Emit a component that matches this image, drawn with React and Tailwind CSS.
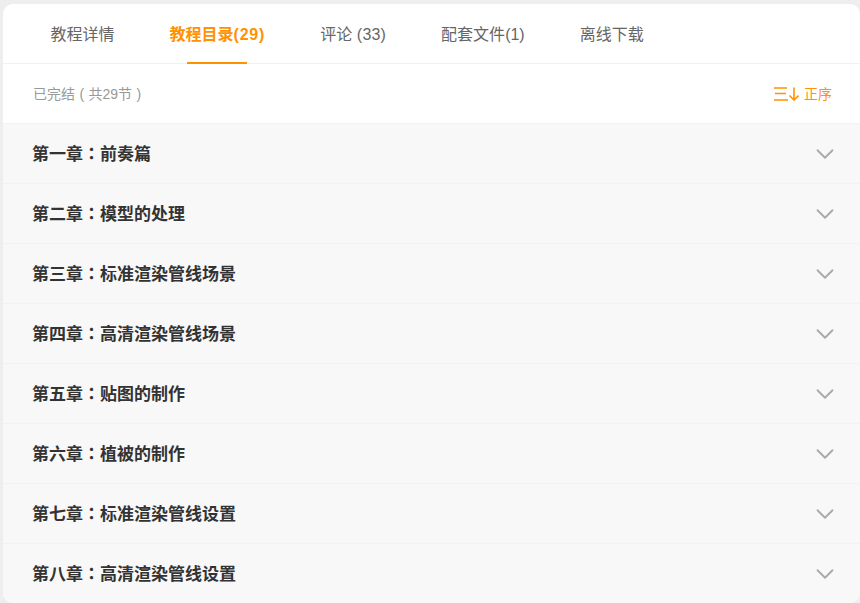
import { ChevronDown } from "lucide-react";

const tabs = [
  { name: "教程详情" },
  { name: "教程目录", count: "(29)", active: true, spacing: "tracking-[0.8px]" },
  { name: "评论", count: " (33)", spacing: "tracking-[0.2px]" },
  { name: "配套文件", count: "(1)" },
  { name: "离线下载" },
];

const chapters = [
  ["第一章", "前奏篇"],
  ["第二章", "模型的处理"],
  ["第三章", "标准渲染管线场景"],
  ["第四章", "高清渲染管线场景"],
  ["第五章", "贴图的制作"],
  ["第六章", "植被的制作"],
  ["第七章", "标准渲染管线设置"],
  ["第八章", "高清渲染管线设置"],
];

export default function App() {
  return (
    <div className="h-[603px] overflow-hidden bg-[#eeeeee] pl-[3px] pt-1 font-['Liberation_Sans','Noto_Sans_CJK_SC',sans-serif]">
      <div className="h-[599px] overflow-hidden rounded-[10px] bg-white">
        {/* Tabs */}
        <div className="flex h-[60px] gap-[55px] border-b border-[#f2f2f2] pl-[47.5px]">
          {tabs.map((t) => (
            <div
              key={t.name}
              className={`relative flex h-[60px] items-center whitespace-pre pt-0.5 text-base ${
                t.active ? "font-bold text-[#ff9200]" : "text-[#666666]"
              }`}
            >
              {t.name}
              {t.count && <span className={t.spacing}>{t.count}</span>}
              {t.active && (
                <span className="absolute bottom-0 left-1/2 h-0.5 w-[60px] -translate-x-1/2 bg-[#ff9200]" />
              )}
            </div>
          ))}
        </div>

        {/* Status */}
        <div className="flex h-[59px] items-center justify-between pl-[30px] pr-[28px]">
          <span className="whitespace-pre text-sm text-[#999999] [word-spacing:0.5px]">已完结 ( 共29节 )</span>
          <span className="flex items-center gap-[5px] text-sm text-[#ff9200]">
            <svg width="25" height="14" viewBox="0 0 25 14" fill="none" stroke="currentColor" strokeWidth="1.6">
              <path d="M0 1h13M1 6.5h11M0 13h14" />
              <path d="M20 0.5v12.5M15.5 8.5l4.5 4.5 4.5-4.5" />
            </svg>
            正序
          </span>
        </div>

        {/* Chapters */}
        <div>
          {chapters.map(([no, title]) => (
            <div
              key={no}
              className="flex h-[60px] items-center justify-between border-t border-[#f2f2f2] bg-[#f8f8f8] pl-[29px] pr-5"
            >
              <span className="pt-px text-[17px] font-bold text-[#333333]">
                {no}
                <span className="font-['Noto_Sans_CJK_TC']">：</span>
                {title}
              </span>
              <ChevronDown size={30} strokeWidth={1.5} className="text-[#aaaaaa]" />
            </div>
          ))}
        </div>
      </div>
    </div>
  );
}
